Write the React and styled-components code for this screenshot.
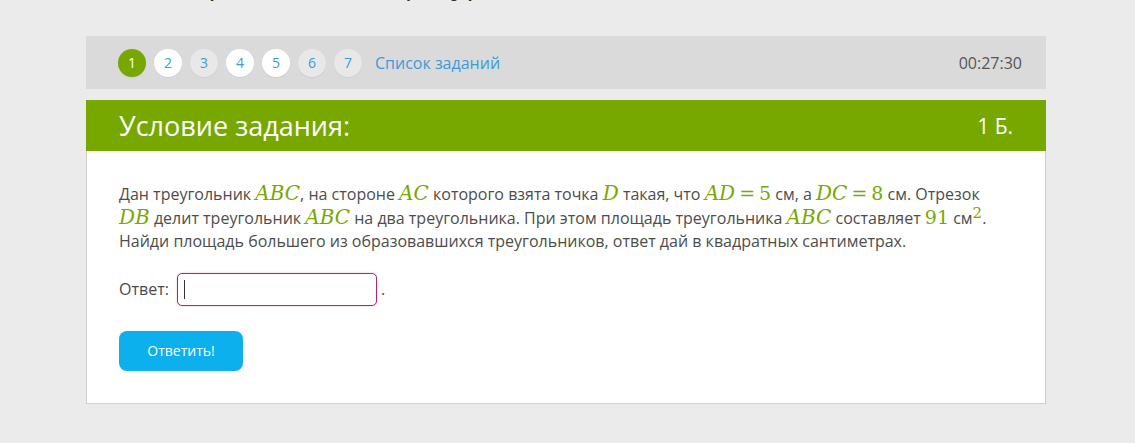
import React from 'react';
import styled, { createGlobalStyle } from 'styled-components';

const GlobalStyle = createGlobalStyle`
  body {
    margin: 0;
    background: #ebebeb;
    font-family: "Open Sans", "Noto Sans", sans-serif;
    color: #4a4a4a;
  }
`;

// номера заданий: open — уже открыт (белый), current — текущее
const tasks = [
  { n: 1, state: 'current' },
  { n: 2, state: 'open' },
  { n: 3, state: 'idle' },
  { n: 4, state: 'open' },
  { n: 5, state: 'open' },
  { n: 6, state: 'idle' },
  { n: 7, state: 'idle' },
];

const App = () => {
  return (
    <>
      <GlobalStyle />
      <Page>
        <PageTitle>Повторение темы: фигуры</PageTitle>

        <NavBar>
          <Steps>
            {tasks.map((t) => (
              <Step key={t.n} state={t.state}>{t.n}</Step>
            ))}
            <ListLink>Список заданий</ListLink>
          </Steps>
          <Timer>00:27:30</Timer>
        </NavBar>

        <Card>
          <CardHeader>
            <HeaderTitle>Условие задания:</HeaderTitle>
            <Points>1 Б.</Points>
          </CardHeader>

          <CardBody>
            <Problem>
              Дан треугольник <M>ABC</M>, на стороне <M>AC</M> которого взята точка <M>D</M> такая,
              что <M>AD</M><Op>=</Op><Num>5</Num> см, а <M>DC</M><Op>=</Op><Num>8</Num> см. Отрезок <M>DB</M> делит
              треугольник <M>ABC</M> на два треугольника. При этом площадь треугольника <M>ABC</M> составляет{' '}
              <Num>91</Num> см<Sup>2</Sup>. Найди площадь большего из образовавшихся треугольников, ответ дай в
              квадратных сантиметрах.
            </Problem>

            <AnswerRow>
              <Label>Ответ:</Label>
              <InputWrap>
                <AnswerInput autoFocus />
                <Caret />
              </InputWrap>
              <Dot>.</Dot>
            </AnswerRow>

            <SubmitButton>Ответить!</SubmitButton>
          </CardBody>
        </Card>
      </Page>
    </>
  );
};

export default App;

const Page = styled.div`
  width: 960px;
  margin-left: 86px;
`;

const PageTitle = styled.h1`
  margin: -35px 0 35px 33px;
  height: 36px;
  line-height: 36px;
  font-size: 30px;
  font-weight: 400;
  color: #333;
  white-space: nowrap;
`;

const NavBar = styled.div`
  height: 53px;
  background: #dadada;
  display: flex;
  align-items: center;
  justify-content: space-between;
  padding: 0 24px 0 32px;
`;

const Steps = styled.div`
  display: flex;
  align-items: center;
  gap: 8px;
`;

const stepBg = { current: '#77a800', open: '#ffffff', idle: '#e8e8e8' };

const Step = styled.span`
  width: 28px;
  height: 28px;
  border-radius: 50%;
  display: flex;
  align-items: center;
  justify-content: center;
  font-size: 14px;
  background: ${({ state }) => stepBg[state]};
  color: ${({ state }) => (state === 'current' ? '#fff' : '#3d9bd8')};
  box-shadow: 0 1px 1px rgba(0, 0, 0, 0.06);
`;

const ListLink = styled.a`
  margin-left: 5px;
  font-size: 16px;
  color: #3d9bd8;
  cursor: pointer;
`;

const Timer = styled.span`
  font-size: 16px;
  color: #555;
`;

const Card = styled.div`
  margin-top: 11px;
  background: #fff;
  border: 1px solid #cfcfcf;
  border-top: none;
`;

const CardHeader = styled.div`
  height: 51px;
  margin: 0 -1px;
  background: #77a800;
  color: #fff;
  display: flex;
  align-items: center;
  justify-content: space-between;
  padding: 0 33px;
`;

const HeaderTitle = styled.h2`
  margin: 0;
  font-size: 27px;
  font-weight: 400;
`;

const Points = styled.span`
  font-size: 21px;
`;

const CardBody = styled.div`
  padding: 32px 32px 32px;
`;

const Problem = styled.p`
  margin: 0;
  font-size: 16px;
  line-height: 23.5px;
  color: #4d4d4d;
`;

const mathFont = `
  font-family: "DejaVu Serif", "Liberation Serif", serif;
  color: #78a800;
  line-height: 0;
`;

const M = styled.i`
  ${mathFont}
  font-size: 20px;
`;

const Num = styled.span`
  ${mathFont}
  font-size: 19px;
`;

const Op = styled.span`
  ${mathFont}
  font-size: 19px;
  margin: 0 4px;
`;

const Sup = styled.sup`
  ${mathFont}
  font-size: 15px;
`;

const AnswerRow = styled.div`
  display: flex;
  align-items: center;
  margin-top: 19px;
`;

const Label = styled.span`
  font-size: 16px;
  margin-right: 8px;
`;

const InputWrap = styled.span`
  position: relative;
  display: inline-flex;
`;

const AnswerInput = styled.input`
  width: 200px;
  height: 33px;
  box-sizing: border-box;
  border: 1px solid #a8287d;
  border-radius: 5px;
  box-shadow: 0 0 2px rgba(168, 40, 125, 0.35);
  outline: none;
  padding: 0 6px;
  font-size: 16px;
  font-family: inherit;
  caret-color: transparent;
`;

const Caret = styled.span`
  position: absolute;
  left: 7px;
  top: 7px;
  width: 1px;
  height: 19px;
  background: #333;
`;

const Dot = styled.span`
  margin-left: 4px;
  font-size: 16px;
`;

const SubmitButton = styled.button`
  margin-top: 25px;
  width: 124px;
  height: 40px;
  border: none;
  border-radius: 8px;
  background: #0cb0ec;
  color: #fff;
  font-family: inherit;
  font-size: 14px;
  cursor: pointer;
`;
